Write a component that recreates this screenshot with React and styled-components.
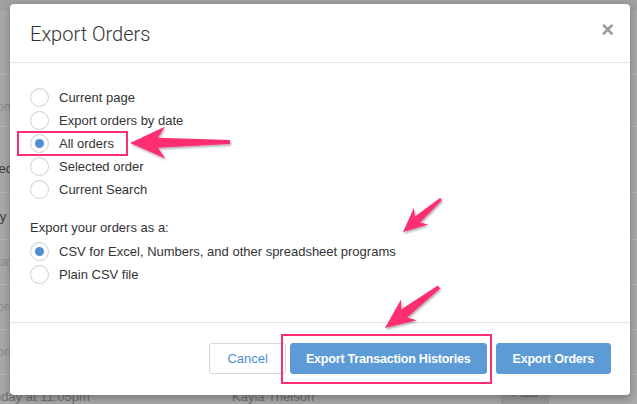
import React from 'react';
import styled, { createGlobalStyle } from 'styled-components';

const GlobalStyle = createGlobalStyle`
  html, body { margin: 0; padding: 0; }
  body { font-family: "Helvetica Neue", "Liberation Sans", Arial, sans-serif; }
`;

const PINK = '#fe2f6f';
const BLUE = '#5d9bd6';

const Page = styled.div`
  position: relative;
  width: 637px;
  height: 404px;
  overflow: hidden;
  background: #a8a8a8;
`;

const Table = styled.div`
  display: flex;
  flex-direction: column;
`;

const BgRow = styled.div`
  display: flex;
  align-items: flex-end;
  height: ${({ h }) => h}px;
  flex-shrink: 0;
  box-sizing: border-box;
  padding-bottom: ${({ pb }) => (pb == null ? 14 : pb)}px;
  border-bottom: 1px solid ${({ top }) => (top ? '#9c9c9c' : '#b6b6b6')};
  background: ${({ top }) => (top ? '#a0a0a0' : 'transparent')};
  font-size: 13px;
  line-height: 16px;
  white-space: nowrap;
`;

const BgCell = styled.span`
  color: ${({ faded }) => (faded ? '#8c8c8c' : '#3c3c3c')};
  width: ${({ w }) => w || 'auto'};
  flex-shrink: 0;
`;

const Badge = styled.span`
  background: #9a9a9a;
  color: #6a6a6a;
  padding: 2px 11px 4px;
  font-size: 13px;
`;

const Modal = styled.div`
  position: absolute;
  left: 10px;
  top: 4px;
  width: 620px;
  height: 391px;
  background: #fff;
  border-radius: 4px;
  box-shadow: 0 3px 9px rgba(0, 0, 0, 0.3);
  display: flex;
  flex-direction: column;
  box-sizing: border-box;
`;

const Header = styled.div`
  height: 58px;
  display: flex;
  align-items: center;
  justify-content: space-between;
  padding: 0 16px 0 20px;
  border-bottom: 1px solid #e5e5e5;
  flex-shrink: 0;
`;

const Title = styled.h4`
  margin: 0;
  font-family: Roboto, "Liberation Sans", Arial, sans-serif;
  font-weight: 300;
  font-size: 20px;
  color: #333;
  padding-top: 2px;
`;

const Close = styled.span`
  font-family: "Liberation Sans", Arial, sans-serif;
  font-weight: bold;
  font-size: 22px;
  line-height: 1;
  color: #999;
  margin-top: -6px;
`;

const Body = styled.div`
  flex: 1;
  padding: 23px 20px 0;
  display: flex;
  flex-direction: column;
  align-items: flex-start;
`;

const Option = styled.label`
  position: relative;
  display: inline-flex;
  align-items: center;
  height: 23px;
  font-size: 13px;
  color: #333;
  gap: 10px;

  ${({ marked }) =>
    marked &&
    `
    &::after {
      content: '';
      position: absolute;
      top: -1px;
      bottom: -1px;
      left: -13px;
      right: -14px;
      border: 2px solid ${PINK};
    }
  `}
`;

const Radio = styled.span`
  position: relative;
  width: 17px;
  height: 17px;
  border-radius: 50%;
  border: 1px solid #cdd1d6;
  background: #fff;
  box-shadow: inset 0 1px 1px rgba(0, 0, 0, 0.04);
  flex-shrink: 0;

  ${({ checked }) =>
    checked &&
    `
    &::after {
      content: '';
      position: absolute;
      left: 4px;
      top: 4px;
      width: 9px;
      height: 9px;
      border-radius: 50%;
      background: #4f8fd4;
    }
  `}
`;

const SectionLabel = styled.div`
  font-size: 13px;
  color: #333;
  line-height: 18px;
  margin: 18px 0 3px;
`;

const Footer = styled.div`
  display: flex;
  justify-content: flex-end;
  align-items: center;
  gap: 9px;
  padding: 20px 19px 21px 20px;
  border-top: 1px solid #e5e5e5;
`;

const Button = styled.button`
  height: 31px;
  padding: 0 ${({ px }) => px || 15}px;
  border-radius: 3px;
  font-family: "Helvetica Neue", "Liberation Sans", Arial, sans-serif;
  font-size: ${({ primary }) => (primary ? '12.5px' : '13px')};
  font-weight: ${({ primary }) => (primary ? 'bold' : 'normal')};
  letter-spacing: ${({ primary }) => (primary ? '-0.2px' : '0')};
  color: ${({ primary }) => (primary ? '#fff' : '#4b8ed3')};
  background: ${({ primary }) => (primary ? BLUE : '#fff')};
  border: 1px solid ${({ primary }) => (primary ? BLUE : '#d3d7dc')};
  cursor: pointer;
  box-sizing: border-box;
`;

const Marked = styled.span`
  position: relative;
  display: inline-flex;
  margin-left: -5px;

  &::after {
    content: '';
    position: absolute;
    top: -9px;
    bottom: -10px;
    left: -9px;
    right: -5px;
    border: 2px solid ${PINK};
  }
`;

const Annotations = styled.svg`
  position: absolute;
  left: 0;
  top: 0;
  pointer-events: none;
`;

const arrowPoints = ([tx, ty], [hx, hy], headLen, headHalf, shaftTail, shaftHead) => {
  const dx = hx - tx;
  const dy = hy - ty;
  const len = Math.hypot(dx, dy);
  const ux = dx / len;
  const uy = dy / len;
  const nx = -uy;
  const ny = ux;
  const bx = hx - ux * headLen;
  const by = hy - uy * headLen;
  const kx = hx - ux * headLen * 0.8;
  const ky = hy - uy * headLen * 0.8;
  const pts = [
    [hx, hy],
    [bx + nx * headHalf, by + ny * headHalf],
    [kx + nx * shaftHead, ky + ny * shaftHead],
    [tx + nx * shaftTail, ty + ny * shaftTail],
    [tx - nx * shaftTail, ty - ny * shaftTail],
    [kx - nx * shaftHead, ky - ny * shaftHead],
    [bx - nx * headHalf, by - ny * headHalf],
  ];
  return pts.map((p) => p.map((v) => v.toFixed(1)).join(',')).join(' ');
};

const arrows = [
  { tail: [230, 142], tip: [130, 143], head: 35, half: 16, st: 2, sh: 5 },
  { tail: [441, 199], tip: [403, 232], head: 24, half: 11, st: 1.5, sh: 4 },
  { tail: [439, 287], tip: [385, 328], head: 30, half: 13, st: 2, sh: 5 },
];

const bgRows = [
  { h: 10, top: true, pb: 0 },
  { h: 65, left: 'Unfulfilled', shift: -58 },
  { h: 52, left: 'Custom', shift: -30, faded: true, pb: 11 },
  { h: 66, left: 'Completed', shift: -50, pb: 15 },
  { h: 47, left: 'Monday', shift: -40 },
  { h: 45, left: 'Today', shift: -20, faded: true },
  { h: 45, left: 'Instore', shift: -24, faded: true },
  { h: 45, left: 'Instore', shift: -24, faded: true },
];

const orderOptions = [
  { label: 'Current page' },
  { label: 'Export orders by date' },
  { label: 'All orders', checked: true, marked: true },
  { label: 'Selected order' },
  { label: 'Current Search' },
];

const formatOptions = [
  { label: 'CSV for Excel, Numbers, and other spreadsheet programs', checked: true },
  { label: 'Plain CSV file' },
];

const App = () => {
  return (
    <Page>
      <GlobalStyle />
      <Table>
        {bgRows.map((r, i) => (
          <BgRow key={i} h={r.h} top={r.top} pb={r.pb}>
            {r.left && (
              <BgCell faded={r.faded} style={{ marginLeft: r.shift }}>
                {r.left}
              </BgCell>
            )}
          </BgRow>
        ))}
        <BgRow h={40} pb={9}>
          <BgCell w="254px" style={{ marginLeft: -22, color: '#707070' }}>Sunday at 11:05pm</BgCell>
          <BgCell w="269px" style={{ color: '#707070' }}>Kayla Theison</BgCell>
          <Badge>Paid</Badge>
        </BgRow>
      </Table>

      <Modal>
        <Header>
          <Title>Export Orders</Title>
          <Close>×</Close>
        </Header>
        <Body>
          {orderOptions.map((o) => (
            <Option key={o.label} marked={o.marked}>
              <Radio checked={o.checked} />
              {o.label}
            </Option>
          ))}
          <SectionLabel>Export your orders as a:</SectionLabel>
          {formatOptions.map((o) => (
            <Option key={o.label}>
              <Radio checked={o.checked} />
              {o.label}
            </Option>
          ))}
        </Body>
        <Footer>
          <Button px={17}>Cancel</Button>
          <Marked>
            <Button primary px={15}>Export Transaction Histories</Button>
          </Marked>
          <Button primary px={16}>Export Orders</Button>
        </Footer>
      </Modal>

      <Annotations width="637" height="404">
        <defs>
          <filter id="arrowShadow" x="-20%" y="-20%" width="140%" height="140%">
            <feDropShadow dx="1" dy="1.5" stdDeviation="1.2" floodColor="#000" floodOpacity="0.35" />
          </filter>
        </defs>
        {arrows.map((a, i) => (
          <polygon
            key={i}
            points={arrowPoints(a.tail, a.tip, a.head, a.half, a.st, a.sh)}
            fill={PINK}
            strokeLinejoin="round"
            filter="url(#arrowShadow)"
          />
        ))}
      </Annotations>
    </Page>
  );
};

export default App;
